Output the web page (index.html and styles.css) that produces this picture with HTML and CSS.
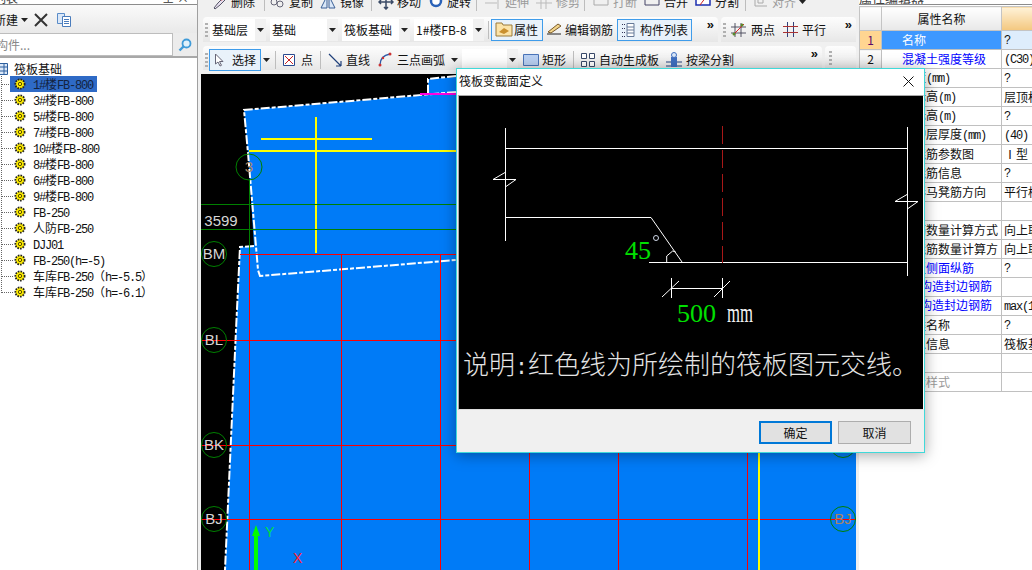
FILE: index.html
```html
<!DOCTYPE html>
<html lang="zh-CN">
<head>
<meta charset="utf-8">
<title>筏板变截面定义</title>
<link rel="stylesheet" href="styles.css">
</head>
<body>
<svg class="defs" width="0" height="0" aria-hidden="true">
  <symbol id="gear" viewBox="0 0 12 12">
    <circle cx="6" cy="6" r="4.600" fill="#ffee00" stroke="#222" stroke-width="1.800" stroke-dasharray="1.600 1.100"/>
    <circle cx="6" cy="6" r="1.700" fill="#ffee00" stroke="#5a4c00" stroke-width="1"/>
  </symbol>
  <symbol id="arrow" viewBox="0 0 7 4"><path d="M0 0h7L3.500 4z" fill="#222"/></symbol>
</svg>
<div class="app">
  <aside class="left">
    <div class="paneltitle"><span class="cuttext lefttitle">构件列表</span><span class="pin">⊥ ×</span></div>
    <div class="lefttools">
      <span class="newbtn">新建</span>
      <svg class="ar" width="7" height="4"><use href="#arrow"/></svg>
      <svg class="ico del" width="14" height="14" viewBox="0 0 14 14"><path d="M1 1l12 12M13 1L1 13" stroke="#333" stroke-width="2"/></svg>
      <svg class="ico" width="16" height="15" viewBox="0 0 16 15"><path d="M1.500 1.500h7v10h-7z" fill="#dbe8f8" stroke="#5a8cc8"/><path d="M6.500 4.500h8v10h-8z" fill="#fff" stroke="#4a7cbc"/><path d="M8 7.500h5M8 9.500h5M8 11.500h5" stroke="#4a7cbc"/></svg>
    </div>
    <div class="search">
      <div class="searchbox">查找构件...</div>
      <div class="searchbtn"><svg width="14" height="14" viewBox="0 0 14 14"><circle cx="8.500" cy="5.500" r="4" fill="#dff1fb" stroke="#3f9bd8" stroke-width="1.800"/><path d="M5.500 8.500L1.500 12.500" stroke="#3f9bd8" stroke-width="2.400"/></svg></div>
    </div>
    <div class="tree">
      <div class="root"><svg class="rooticon" width="8" height="12" viewBox="0 0 8 12"><path d="M-2 .5h9.500v11H-2M0 4h8M0 8h8M4 1v10" fill="#dbe8f8" stroke="#2d5f9e"/></svg><span>筏板基础</span></div>
      <ul class="nodes">
        <li class="node sel"><svg width="12" height="12"><use href="#gear"/></svg><span class="lbl"><b>1#</b>楼<b>FB-800</b></span></li>
        <li class="node"><svg width="12" height="12"><use href="#gear"/></svg><span class="lbl"><b>3#</b>楼<b>FB-800</b></span></li>
        <li class="node"><svg width="12" height="12"><use href="#gear"/></svg><span class="lbl"><b>5#</b>楼<b>FB-800</b></span></li>
        <li class="node"><svg width="12" height="12"><use href="#gear"/></svg><span class="lbl"><b>7#</b>楼<b>FB-800</b></span></li>
        <li class="node"><svg width="12" height="12"><use href="#gear"/></svg><span class="lbl"><b>10#</b>楼<b>FB-800</b></span></li>
        <li class="node"><svg width="12" height="12"><use href="#gear"/></svg><span class="lbl"><b>8#</b>楼<b>FB-800</b></span></li>
        <li class="node"><svg width="12" height="12"><use href="#gear"/></svg><span class="lbl"><b>6#</b>楼<b>FB-800</b></span></li>
        <li class="node"><svg width="12" height="12"><use href="#gear"/></svg><span class="lbl"><b>9#</b>楼<b>FB-800</b></span></li>
        <li class="node"><svg width="12" height="12"><use href="#gear"/></svg><span class="lbl"><b>FB-250</b></span></li>
        <li class="node"><svg width="12" height="12"><use href="#gear"/></svg><span class="lbl">人防<b>FB-250</b></span></li>
        <li class="node"><svg width="12" height="12"><use href="#gear"/></svg><span class="lbl"><b>DJJ01</b></span></li>
        <li class="node"><svg width="12" height="12"><use href="#gear"/></svg><span class="lbl"><b>FB-250(h=-5)</b></span></li>
        <li class="node"><svg width="12" height="12"><use href="#gear"/></svg><span class="lbl">车库<b>FB-250</b>（<b>h=-5.5</b>）</span></li>
        <li class="node"><svg width="12" height="12"><use href="#gear"/></svg><span class="lbl">车库<b>FB-250</b>（<b>h=-6.1</b>）</span></li>
      </ul>
    </div>
  </aside>

  <main class="center">
    <div class="row0">
      <div class="row0in">
        <span class="tool t0 w-del"><svg width="16" height="16" viewBox="0 0 16 16"><path d="M2 14l4-5 6-6 2 2-6 6-5 4z" fill="#e8e0f0" stroke="#556"/><path d="M9 6l2-2" stroke="#c33" stroke-width="2"/></svg>删除</span>
        <i class="sep"></i>
        <span class="tool t0 w-copy"><svg width="18" height="16" viewBox="0 0 18 16"><circle cx="6" cy="8" r="3" fill="none" stroke="#667"/><circle cx="12" cy="10" r="3" fill="none" stroke="#667"/></svg>复制</span>
        <span class="tool t0 w-mir"><svg width="18" height="16" viewBox="0 0 18 16"><path d="M8 2L2 14h6zM10 2l6 12h-6z" fill="#dbe8f8" stroke="#3a5f95"/></svg>镜像</span>
        <i class="sep"></i>
        <span class="tool t0 w-mov"><svg width="16" height="16" viewBox="0 0 16 16"><path d="M8 1v14M1 8h14M3 6L1 8l2 2M13 6l2 2-2 2M6 13l2 2 2-2" fill="none" stroke="#3a4a66" stroke-width="1.500"/></svg>移动</span>
        <span class="tool t0 w-rot"><svg width="16" height="16" viewBox="0 0 16 16"><circle cx="8" cy="7" r="5" fill="#fff" stroke="#2a62b8" stroke-width="2.500"/></svg>旋转</span>
        <i class="sep"></i>
        <span class="tool t0 off w-ext"><svg width="18" height="16" viewBox="0 0 18 16"><path d="M1 5h12M1 9h12M14 1v14" stroke="#bbb"/></svg>延伸</span>
        <span class="tool t0 off w-trim"><svg width="18" height="16" viewBox="0 0 18 16"><path d="M1 5h16M1 9h16M6 1v14M11 1v14" stroke="#bbb"/></svg>修剪</span>
        <i class="sep"></i>
        <span class="tool t0 off w-brk"><svg width="18" height="16" viewBox="0 0 18 16"><path d="M2 5h14v6H2z" fill="none" stroke="#aaa"/></svg>打断</span>
        <span class="tool t0 w-mrg"><svg width="18" height="16" viewBox="0 0 18 16"><path d="M2 4h14v7H2z" fill="none" stroke="#446"/></svg>合并</span>
        <span class="tool t0 w-spl"><svg width="18" height="16" viewBox="0 0 18 16"><path d="M2 3h14v8H2z" fill="#fff" stroke="#1c2fb0" stroke-width="1.500"/><path d="M6 11l6-8" stroke="#c22"/></svg>分割</span>
        <i class="sep"></i>
        <span class="tool t0 off w-ali"><svg width="16" height="16" viewBox="0 0 16 16"><path d="M2 0v12h12M5 2h5v7H5z" fill="none" stroke="#aaa"/></svg>对齐<svg class="ar" width="7" height="4"><use href="#arrow"/></svg></span>
      </div>
    </div>

    <div class="barline bl1">
      <div class="bar bar-a">
        <i class="grip"></i>
        <div class="combo c-a"><span class="cbox">基础层</span><span class="carr"><svg width="7" height="4"><use href="#arrow"/></svg></span></div>
        <div class="combo c-b"><span class="cbox">基础</span><span class="carr"><svg width="7" height="4"><use href="#arrow"/></svg></span></div>
        <div class="combo c-c"><span class="cbox">筏板基础</span><span class="carr"><svg width="7" height="4"><use href="#arrow"/></svg></span></div>
        <div class="combo c-d"><span class="cbox">1#楼FB-8</span><span class="carr"><svg width="7" height="4"><use href="#arrow"/></svg></span></div>
        <i class="sep tall"></i>
        <span class="tool on w-attr"><svg width="18" height="15" viewBox="0 0 18 15"><path d="M1 1h6l1 2h9v11H1z" fill="#fbe3a8" stroke="#9a7a3a"/><path d="M4 10l5-4 5 3-5 3z" fill="#c9902f"/></svg>属性</span>
        <span class="tool w-edit"><svg width="17" height="15" viewBox="0 0 17 15"><path d="M1 12h14" stroke="#222"/><path d="M2 10l10-8 3 2-10 7z" fill="#f2d48a" stroke="#7a5a2a"/></svg>编辑钢筋</span>
        <span class="tool on w-list"><svg width="14" height="16" viewBox="0 0 14 16"><path d="M1 2.500h3M1 6.500h3M1 10.500h3M1 14.500h3" stroke="#335" stroke-dasharray="1 1"/><path d="M6 1.500h7v13H6zM6 5h7M6 8h7M6 11h7" fill="#fff" stroke="#667a99"/></svg>构件列表</span>
        <span class="more">»</span>
      </div>
      <div class="bar bar-b">
        <i class="grip"></i>
        <span class="tool w-two"><svg width="15" height="15" viewBox="0 0 15 15"><path d="M4 1v14M10 1v14M0 5h15M0 11h15" stroke="#445" stroke-width=".9"/><path d="M2 13L13 2" stroke="#d22"/><circle cx="3" cy="12" r="1.500" fill="#5a8a2a"/><circle cx="11" cy="3" r="1.500" fill="#5a8a2a"/></svg>两点</span>
        <span class="tool w-par"><svg width="15" height="15" viewBox="0 0 15 15"><path d="M4.500 0v15M10.500 0v15" stroke="#33407a"/><path d="M0 4.500h15M0 10.500h15" stroke="#a33"/></svg>平行</span>
        <span class="more">»</span>
      </div>
    </div>

    <div class="barline bl2">
      <div class="bar bar-c">
        <i class="grip"></i>
        <span class="tool on w-sel"><svg width="11" height="14" viewBox="0 0 11 14"><path d="M1.500 1v10l2.500-2 2 4 1.500-.7-2-3.800h3.500z" fill="#fff" stroke="#667"/></svg>选择</span>
        <span class="carr bare w-a1"><svg width="7" height="4"><use href="#arrow"/></svg></span>
        <i class="sep tall"></i>
        <span class="tool w-pt"><svg width="12" height="12" viewBox="0 0 12 12"><path d="M.5.500h11v11H.5z" fill="#fff" stroke="#2b4a90"/><path d="M2 2l8 8M10 2l-8 8" stroke="#c22"/></svg>点</span>
        <i class="sep tall"></i>
        <span class="tool w-line"><svg width="14" height="14" viewBox="0 0 14 14"><path d="M1 1l12 12M13 13H8M13 13V8" fill="none" stroke="#1f3f7a" stroke-width="1.200"/></svg>直线</span>
        <span class="tool w-arc"><svg width="14" height="15" viewBox="0 0 14 15"><path d="M2 13C2 7 6 3 12 2" fill="none" stroke="#2d5aa8" stroke-width="1.300"/><circle cx="2" cy="13" r="1.500" fill="#c33"/><circle cx="12" cy="2" r="1.500" fill="#c33"/><circle cx="5" cy="6" r="1.200" fill="#c33"/></svg>三点画弧</span>
        <span class="carr bare w-a2"><svg width="7" height="4"><use href="#arrow"/></svg></span>
        <div class="combo c-e"><span class="cbox"></span><span class="carr"><svg width="7" height="4"><use href="#arrow"/></svg></span></div>
        <span class="tool w-rect"><svg width="16" height="12" viewBox="0 0 16 12"><path d="M.5.500h15v11H.5z" fill="#b9d0f2" stroke="#4a74b8"/></svg>矩形</span>
        <i class="sep tall"></i>
        <span class="tool w-auto"><svg width="14" height="14" viewBox="0 0 14 14"><path d="M.5.500h5v5h-5zM8.500.500h5v5h-5zM.5 8.500h5v5h-5zM8.500 8.500h5v5h-5z" fill="#fff" stroke="#3a4a6a"/></svg>自动生成板</span>
        <span class="tool w-beam"><svg width="16" height="16" viewBox="0 0 16 16"><path d="M0 10h16M0 14h16" stroke="#23407f"/><path d="M5 5h6v10H5z" fill="#3f6fc0"/><circle cx="8" cy="3" r="2.500" fill="#dbe8f8" stroke="#3f6fc0"/></svg>按梁分割</span>
        <span class="more">»</span>
      </div>
      <div class="bar bar-d"><i class="grip"></i></div>
    </div>

    <div class="canvas">
      <svg class="cad" width="655" height="496" viewBox="201 74 655 496">
        <rect x="201" y="74" width="655" height="496" fill="#000"/>
        <polygon fill="#007bf7" points="244,110 428,95 428,79 470,76 856,76 856,570 225,570 240,247 254,246 248,153"/>
        <g class="dash">
          <polyline points="456,76 428,79 428,94"/>
          <polyline points="456,92 244,110 248,153 258,270 260,276 456,260"/>
          <polyline points="254,246 240,247 236,330 225,570"/>
        </g>
        <path d="M420 94h36" stroke="#ff00e0" stroke-width="2"/>
        <g stroke="#ff0000" fill="none">
          <path d="M240 254.500h616" stroke-width="1"/>
          <path d="M201 340.500h655M201 445.500h655M201 519.500h655"/>
          <path d="M249.500 254v316M341.500 254v316M440.500 254v316M529.500 254v316M618.500 254v316M747.500 254v316"/>
        </g>
        <g stroke="#ffff00" fill="none" stroke-width="2">
          <path d="M316 117v136M261 139h111M249 151h207M759 254v316"/>
        </g>
        <g stroke="#008000" fill="none">
          <path d="M201 204.500h255M201 229.500h255M249.500 180v74"/>
          <circle cx="249" cy="167" r="13"/>
          <circle cx="214" cy="254" r="12.500"/>
          <circle cx="214" cy="340" r="12.500"/>
          <circle cx="214" cy="445" r="12.500"/>
          <circle cx="214" cy="519" r="12.500"/>
          <circle cx="843" cy="445" r="12.500"/>
          <circle cx="843" cy="519" r="12.500"/>
        </g>
        <g class="axlbl">
          <text x="249" y="172" class="orange">3</text>
          <text x="214" y="259">BM</text>
          <text x="214" y="345">BL</text>
          <text x="214" y="450">BK</text>
          <text x="214" y="524">BJ</text>
          <text x="843" y="524" class="orange">BJ</text>
          <text x="221" y="226">3599</text>
        </g>
        <path d="M256 525l4 11h-2v34h-4v-34h-2z" fill="#00ff00"/>
        <text x="265" y="537" class="axy">Y</text>
        <text x="293" y="563" class="axx">X</text>
      </svg>
    </div>
  </main>

  <section class="right">
    <div class="paneltitle"><span class="cuttext">属性编辑器</span></div>
    <table class="props">
      <colgroup><col class="c1"><col class="c2"><col class="c3"></colgroup>
      <thead><tr><th></th><th>属性名称</th><th class="valh"></th></tr></thead>
      <tbody>
        <tr class="cur"><td class="idx">1</td><td class="nm">名称</td><td><b>?</b></td></tr>
        <tr><td class="idx">2</td><td class="nm lnk">混凝土强度等级</td><td><b>(C30)</b></td></tr>
        <tr><td class="idx">3</td><td class="nm">厚度<b>(mm)</b></td><td><b>?</b></td></tr>
        <tr><td class="idx">4</td><td class="nm">顶标高<b>(m)</b></td><td>层顶标高</td></tr>
        <tr><td class="idx">5</td><td class="nm">底标高<b>(m)</b></td><td><b>?</b></td></tr>
        <tr><td class="idx">6</td><td class="nm">保护层厚度<b>(mm)</b></td><td><b>(40)</b></td></tr>
        <tr><td class="idx">7</td><td class="nm">马凳筋参数图</td><td>Ⅰ型</td></tr>
        <tr><td class="idx">8</td><td class="nm">马凳筋信息</td><td><b>?</b></td></tr>
        <tr><td class="idx">9</td><td class="nm">线形马凳筋方向</td><td>平行横向</td></tr>
        <tr><td class="idx">10</td><td class="nm"></td><td></td></tr>
        <tr><td class="idx">11</td><td class="nm">拉筋数量计算方式</td><td>向上取整</td></tr>
        <tr><td class="idx">12</td><td class="nm">马凳筋数量计算方</td><td>向上取整</td></tr>
        <tr><td class="idx">13</td><td class="nm lnk">筏板侧面纵筋</td><td><b>?</b></td></tr>
        <tr><td class="idx">14</td><td class="nm lnk"><b>U</b>形构造封边钢筋</td><td></td></tr>
        <tr><td class="idx">15</td><td class="nm lnk"><b>U</b>形构造封边钢筋</td><td><b>max(10,d)</b></td></tr>
        <tr><td class="idx">16</td><td class="nm">归类名称</td><td><b>?</b></td></tr>
        <tr><td class="idx">17</td><td class="nm">汇总信息</td><td>筏板基础</td></tr>
        <tr><td class="idx">18</td><td class="nm"></td><td></td></tr>
        <tr><td class="idx">19</td><td class="nm mute">显示样式</td><td></td></tr>
      </tbody>
    </table>
  </section>

  <div class="dialog" role="dialog">
    <header class="dtitle"><span>筏板变截面定义</span>
      <svg class="dclose" width="11" height="11" viewBox="0 0 11 11"><path d="M.5.500l10 10M10.500.500l-10 10" stroke="#111"/></svg>
    </header>
    <div class="dbody">
      <svg class="section" width="464" height="313" viewBox="458 96 464 313">
        <g class="w" fill="none" stroke="#fff">
          <path d="M504.500 128v113M504 148.500h402M504 217.500h146L681 262M648 262.500h258.500M906.500 127v149"/>
          <path d="M492 179.500h23M492 179.500l12-7M515 179.500l-10 7"/>
          <path d="M894 201.500h23M894 201.500l12-7M917 201.500l-10 7"/>
          <path d="M665.700 262v-6l6-5 3 1"/>
          <path d="M670.500 278v20M721.500 278v20M670.500 288.500h51M661 297l17-16M713 297l16-16"/>
        </g>
        <path class="dashv" d="M721.500 126v137"/>
        <text x="624" y="259" class="grn">45</text>
        <circle cx="655" cy="238" r="2.500" fill="none" stroke="#cfd8e8"/>
        <text x="676" y="322" class="grn">500</text>
        <text x="726" y="322" class="mm" textLength="26" lengthAdjust="spacingAndGlyphs">mm</text>
        <text x="462" y="374" class="note">说明<tspan class="colon">:</tspan>红色线为所绘制的筏板图元交线。</text>
      </svg>
    </div>
    <footer class="dfoot">
      <button class="btn pri">确定</button>
      <button class="btn">取消</button>
    </footer>
  </div>
</div>
</body>
</html>
```
FILE: styles.css
```css
* { box-sizing: border-box; }
html, body { margin: 0; padding: 0; }
body {
  width: 1032px; height: 570px; overflow: hidden;
  font: 12px/16px "Noto Sans CJK SC", "Liberation Sans", sans-serif;
  color: #111; background: #f0f0f0;
}
.defs { position: absolute; }
.app { display: flex; width: 1032px; height: 570px; overflow: hidden; position: relative; }

/* latin text in the CJK UI is a narrow fixed-pitch face */
b { font: 400 12px/14px "Liberation Mono", monospace; letter-spacing: -1.2px; }

.paneltitle {
  height: 5px; overflow: hidden; border-bottom: 1px solid #8c8c8c;
  display: flex; justify-content: space-between; line-height: 12px;
}
.cuttext { margin-top: -8px; color: #444; white-space: nowrap; }
.lefttitle { margin-left: -30px; }
.pin { margin-top: -8px; padding-right: 8px; color: #333; white-space: nowrap; }

/* left panel */
.left { width: 198px; flex: none; border-right: 1px solid #a0a0a0; background: #fff; display: flex; flex-direction: column; }
.lefttools {
  height: 28px; padding-top: 1px; display: flex; align-items: center; background: linear-gradient(#fafafa, #e9e9e9); overflow: hidden;
}
.newbtn { margin-left: -6px; white-space: nowrap; flex: none; }
.lefttools .ar { margin-left: 3px; }
.ico.del { margin-left: 6px; }
.lefttools .ico:last-child { margin-left: 8px; }
.search { height: 25px; display: flex; border-bottom: 2px solid #a8a8a8; }
.searchbox {
  width: 173px; height: 23px; flex: none; background: #fff; border: 1px solid #bdbdbd; border-left: 0;
  color: #888; line-height: 21px; white-space: nowrap; overflow: hidden; text-indent: -28px;
}
.searchbtn { flex: 1; display: flex; align-items: center; justify-content: center; background: #ececec; }
.tree { flex: 1; padding-top: 2px; background: #fff; }
.root { height: 15px; display: flex; align-items: center; gap: 6px; margin-top: 1px; }
.rooticon { flex: none; }
.nodes { list-style: none; margin: 0; padding: 0 0 0 1px; }
.node {
  height: 16px; display: flex; align-items: center; position: relative;
  background: repeating-linear-gradient(90deg, #666 0 1px, transparent 1px 2px) 1px 8px / 12px 1px no-repeat,
              repeating-linear-gradient(#666 0 1px, transparent 1px 2px) 0 0 / 1px 100% no-repeat;
}
.node:last-child { background-size: 12px 1px, 1px 9px; }
.node svg { margin-left: 13px; flex: none; }
.lbl { margin-left: 7px; white-space: nowrap; }
.node.sel .lbl { color: #14233f; }
.node.sel::before { content: ""; position: absolute; left: 9px; top: 0; width: 87px; height: 16px; background: #2e6ac6; z-index: 0; }
.node.sel svg, .node.sel .lbl { position: relative; z-index: 1; }

/* toolbars */
.center { width: 661px; flex: none; display: flex; flex-direction: column; background: #f0f0f0; }
.row0 { height: 13px; overflow: hidden; padding-left: 14px; }
.row0in { display: flex; align-items: center; height: 18px; margin-top: -7px; }
.barline { display: flex; gap: 3px; padding-left: 5px; }
.bl1 { margin-top: 4px; height: 25px; }
.bl2 { margin-top: 4px; height: 24px; }
.bar {
  display: flex; align-items: center; height: 100%;
  background: linear-gradient(#fdfdfd, #e7e7e7); border-radius: 4px 4px 0 0; position: relative; padding-left: 2px;
}
.bar-a { width: 515px; }
.bar-b { width: 135px; }
.bar-c { width: 619px; padding-top: 3px; }
.bar-d { width: 31px; padding-left: 4px; }
.grip {
  width: 3px; height: 14px; flex: none; margin-right: 2px;
  background: repeating-linear-gradient(#b0b0b0 0 2px, transparent 2px 4px);
}
.sep { width: 1px; height: 18px; background: #bdbdbd; flex: none; }
.row0 .sep { margin: 0 3px; }
.tool { display: flex; align-items: center; gap: 3px; white-space: nowrap; flex: none; height: 22px; }
.tool svg { flex: none; }
.tool.on { border: 1px solid #3f9cea; background: #e9f2fa; padding-left: 3px; }
.off { color: #9a9a9a; }
.more { position: absolute; right: 4px; top: 1px; font: 700 13px/14px "Liberation Sans", sans-serif; }

.w-del { width: 49px; }
.w-copy { width: 51px; }
.w-mir { width: 45px; margin-right: 4px; }
.w-mov { width: 50px; margin-left: 3px; }
.w-rot { width: 45px; }
.w-ext { width: 51px; margin-left: 4px; }
.w-trim { width: 46px; }
.w-brk { width: 51px; margin-left: 4px; }
.w-mrg { width: 51px; }
.w-spl { width: 48px; }
.w-ali { width: 60px; margin-left: 4px; }
.ar { flex: none; }

.combo { display: flex; height: 22px; margin-right: 4px; flex: none; }
.cbox { background: #fff; flex: 1; padding-left: 2px; line-height: 22px; overflow: hidden; white-space: nowrap; }
.carr { width: 11px; display: flex; align-items: center; justify-content: center; background: #f1f1f1; flex: none; }
.carr.bare { background: none; }
.c-a { width: 56px; }
.c-b { width: 68px; }
.c-c { width: 68px; }
.c-d { width: 70px; }
.c-e { width: 56px; margin-right: 5px; }
.bl1 .sep.tall { margin: 0 2px 0 0; }
.w-attr { width: 52px; gap: 1px; }
.w-edit { width: 71px; margin-left: 3px; gap: 2px; }
.w-list { width: 75px; gap: 5px; }
.w-two { width: 46px; margin-left: 3px; gap: 5px; }
.w-par { width: 46px; margin-left: 6px; gap: 4px; }
.bl2 .sep.tall { margin: 0; }
.w-sel { width: 52px; gap: 7px; margin-left: -1px; }
.w-sel svg { margin-left: 1px; }
.w-a1 { margin-right: 4px; width: 10px; height: 20px; }
.w-pt { width: 37px; margin-left: 7px; gap: 6px; }
.w-line { width: 50px; margin-left: 7px; gap: 4px; }
.w-arc { width: 70px; gap: 5px; }
.w-a2 { width: 13px; height: 20px; margin-right: 1px; }
.w-rect { width: 50px; gap: 3px; }
.w-auto { width: 82px; margin-left: 7px; gap: 4px; }
.w-beam { width: 70px; gap: 4px; margin-left: 3px; }

/* cad canvas */
.canvas { margin: 4px 0 0 3px; width: 655px; height: 496px; flex: none; }
.cad { display: block; }
.dash { fill: none; stroke: #fff; stroke-width: 2; stroke-dasharray: 9 2 4 2; }
.axlbl text { font: 15px "Liberation Sans", sans-serif; fill: #d6d6d6; text-anchor: middle; }
.axlbl text.orange { fill: #a98463; }
.axy { font: 14px "Liberation Sans", sans-serif; fill: #00e040; }
.axx { font: 14px "Liberation Sans", sans-serif; fill: #ff2030; }

/* property table */
.right { flex: 1; background: #fff; overflow: hidden; }
.right .cuttext { font-size: 13px; }
.props {
  table-layout: fixed; border-collapse: collapse; width: 210px; margin-top: 1px;
  border-left: 1px solid #c0c0c0; background: #fff;
}
.c1 { width: 22px; } .c2 { width: 120px; } .c3 { width: 68px; }
.props th {
  height: 24px; padding: 0; font-weight: 400; font-size: 12px; text-align: center;
  background: linear-gradient(#fff, #e8e8e8); border: 1px solid #c4c4c4;
}
.props th.valh { background: linear-gradient(#fff2d8, #f3c77e); }
.props tbody tr { height: 19px; }
.props td {
  height: 19px; padding: 0 0 0 2px; white-space: nowrap; overflow: hidden; border: 1px solid #c0c0c0; line-height: 14px;
}
.props td.idx { text-align: center; padding: 0; background: linear-gradient(#fcfcfc, #e9e9e9); }
.props td.nm { padding-left: 20px; }
.lnk { color: #0000ff; }
.mute { color: #999; }
.cur td { background: #deedfc; }
.cur td.idx { background: #ffd591; color: #5a0a6a; }
.cur td.nm { background: #3e98ff; color: #fff; }

/* dialog */
.dialog {
  position: absolute; left: 456px; top: 68px; width: 469px; height: 385px;
  border: 1px solid #40d9d9; background: #f0f0f0; box-shadow: 0 2px 14px rgba(0, 0, 0, .35);
  display: flex; flex-direction: column;
}
.dtitle {
  height: 26px; flex: none; background: #fff; display: flex; align-items: center; justify-content: space-between;
  padding: 0 10px 2px 2px;
}
.dclose { flex: none; }
.dbody { margin-left: 1px; width: 466px; height: 315px; flex: none; border: 1px solid #a8a8a8; border-right-color: #fff; border-bottom-color: #ddd; }
.section { display: block; background: #000; }
.dashv { stroke: #a81818; stroke-dasharray: 18 6; fill: none; }
.grn { font: 26px "Liberation Serif", serif; fill: #00e000; }
.mm { font: 28px "Liberation Serif", serif; fill: #f2f2f2; }
.note { font: 300 26px "Noto Sans CJK SC", sans-serif; fill: #e4e4e4; }
.colon { font: 21.6px "Liberation Mono", monospace; }
.dfoot { flex: 1; display: flex; justify-content: flex-end; align-items: flex-start; gap: 6px; padding: 11px 13px 0 0; }
.btn {
  width: 73px; height: 23px; padding: 0; border: 1px solid #adadad; background: #e1e1e1; color: #111;
  font: 12px/16px "Noto Sans CJK SC", sans-serif;
}
.btn.pri { border: 2px solid #0078d7; }
```
